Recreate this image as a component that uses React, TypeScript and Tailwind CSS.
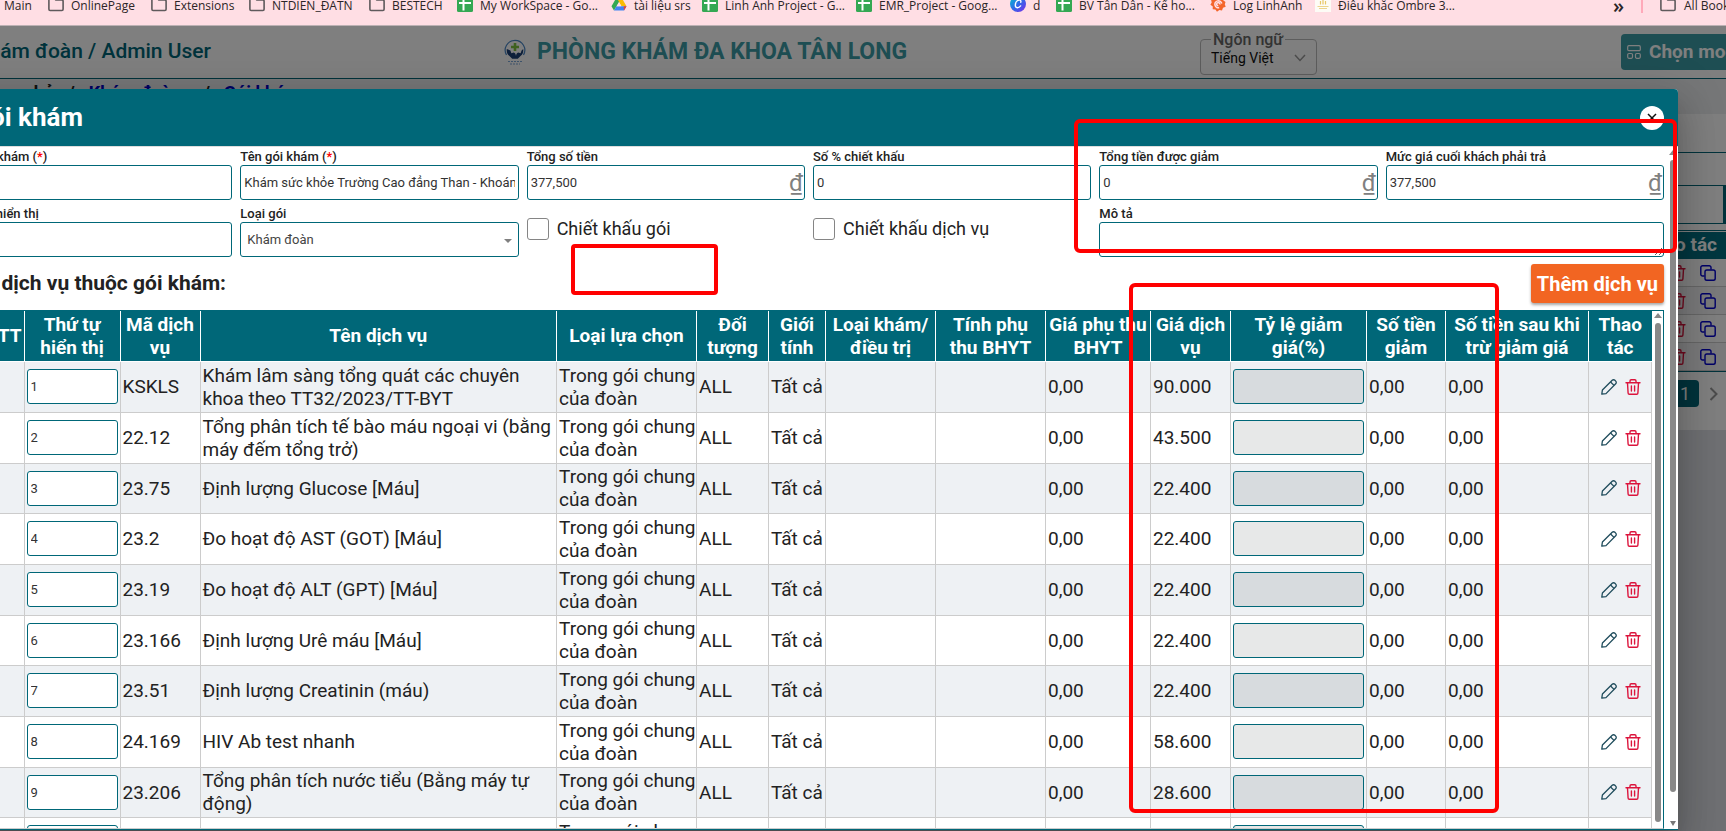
import { useState } from 'react';
import type { ReactNode } from 'react';

const FolderIcon = () => (
  <svg viewBox="0 0 16 16" className="size-4 shrink-0" fill="none">
    <path
      d="M.9 3.2c0-.7.5-1.2 1.2-1.2h3.8l1.9 2h6.1c.7 0 1.2.5 1.2 1.2v8.1c0 .7-.5 1.2-1.2 1.2H2.1c-.7 0-1.2-.5-1.2-1.2V3.2Z"
      stroke="#5f5a5c"
      strokeWidth="1.6"
    />
  </svg>
);

const SheetIcon = () => (
  <svg viewBox="0 0 16 16" className="size-4 shrink-0">
    <rect width="16" height="16" rx="1.5" fill="#34a853" />
    <path d="M2 7h12M6.5 2.5v12" stroke="#fff" strokeWidth="2" />
  </svg>
);

const DriveIcon = () => (
  <svg viewBox="0 0 16 16" className="size-4 shrink-0">
    <path d="M5.5 1.5h5L8 6 3 14.5.5 10.2Z" fill="#34a853" />
    <path d="M5.5 1.5h5l5 8.7h-5Z" fill="#fbbc04" />
    <path d="M5.4 10.2h10.1L13 14.5H3Z" fill="#4285f4" />
    <path d="M12.6 10.2h2.9L13 14.5Z" fill="#ea4335" />
    <path d="M8 6.2 5.7 10.2h4.6Z" fill="#ffdee4" />
  </svg>
);

const CanvaIcon = () => (
  <svg viewBox="0 0 16 16" className="size-4 shrink-0">
    <defs>
      <linearGradient id="canva" x1="0" y1="0" x2="1" y2="1">
        <stop offset="0" stopColor="#00c4cc" />
        <stop offset=".5" stopColor="#2f6be8" />
        <stop offset="1" stopColor="#7d2ae8" />
      </linearGradient>
    </defs>
    <circle cx="8" cy="8" r="8" fill="url(#canva)" />
    <path
      d="M10.8 6.2c.4-1.6-.6-2.5-1.9-2.2C6.8 4.4 5.3 7 5.3 9.300c0 3.200 3.400 3 5.300.6"
      fill="none"
      stroke="#fff"
      strokeWidth="1.4"
      strokeLinecap="round"
    />
  </svg>
);

const GrafanaIcon = () => (
  <svg viewBox="0 0 16 16" className="size-4 shrink-0">
    <path
      d="m8 0 2 1.800 2.800-.2.400 2.600L15.500 6l-.7 2.200.9 2.600-2.700.9-1 2.700-2.600-.5L7 15.800l-1.600-2.300-2.700-.200.100-2.700L.4 8.800l1.300-2.200-.6-2.700 2.700-.5L5.200.9l1.900.8Z"
      fill="#f4652b"
    />
    <path
      d="M11.8 7.5a3.5 3.5 0 1 0-2.6 4.2M9.8 8.5a1.6 1.6 0 1 0-1.5 1.3"
      fill="none"
      stroke="#ffdee4"
      strokeWidth="1.5"
    />
  </svg>
);

const StatueIcon = () => (
  <svg viewBox="0 0 16 16" className="size-4 shrink-0">
    <rect width="16" height="16" fill="#fdfcf6" />
    <path d="M8 2.500v6M5.500 5v3.500M10.500 5v3.500" stroke="#e8c766" strokeWidth="1.2" />
    <path d="M2.500 10.500h11M4 12.500h8" stroke="#ecd58c" strokeWidth="1.2" />
  </svg>
);

const PencilIcon = () => (
  <svg viewBox="0 0 16 16" className="size-4" fill="none" stroke="#1f4c5c" strokeWidth="1.3">
    <path d="M.8 15.2 1.400 11 11.200 1.300a1.900 1.900 0 0 1 2.700 0l.8.8a1.900 1.900 0 0 1 0 2.700L5 14.600Z" strokeLinejoin="round" />
    <path d="m9.600 3 3.400 3.400" />
  </svg>
);

const TrashIcon = () => (
  <svg viewBox="0 0 16 16" className="size-4 shrink-0" fill="none" stroke="#dc143c" strokeWidth="1.4">
    <path d="M1 3.700h14M5 3.500V2A1.200 1.200 0 0 1 6.200.8h3.600A1.200 1.200 0 0 1 11 2v1.500" strokeLinecap="round" />
    <path d="m2.500 4 .6 9.900c0 .8.6 1.300 1.300 1.300h7.200c.7 0 1.300-.5 1.300-1.300l.6-9.900" />
    <path d="M6.400 7v5M9.600 7v5" strokeLinecap="round" />
  </svg>
);

const CopyIcon = () => (
  <svg viewBox="0 0 16 16" className="size-4 shrink-0" fill="none" stroke="#0000d0" strokeWidth="1.4">
    <rect x="5" y="5" width="10.2" height="10.2" rx="1.8" />
    <path d="M4.500 11H2.600A1.800 1.800 0 0 1 .8 9.200V2.600A1.800 1.800 0 0 1 2.600.8h6.600A1.800 1.800 0 0 1 11 2.600v1.900" />
  </svg>
);

const ClinicLogo = () => (
  <svg viewBox="0 0 24 26" className="h-[26px] w-6 shrink-0" fill="none">
    <path d="M3.500 16A9.800 9.800 0 1 1 20.500 16" stroke="#4a86c5" strokeWidth="1.2" />
    <path d="M10.700 4h2.600v2.700H16v2.600h-2.700V12h-2.600V9.300H8V6.700h2.700Z" fill="#7fc241" />
    <path
      d="M3.800 10c-.3 3 .4 5.200 2.400 6.800l3 3h5.600l3-3c2-1.600 2.700-3.800 2.400-6.800l-1.600 1.500-1 2.800-2.300-.8c-1.600.5-2 1.800-2.300 3.500-.3-1.700-.7-3-2.300-3.500l-2.300.8-1-2.800Z"
      fill="#1d4176"
    />
    <path d="M5 22.500h14M7 25h10" stroke="#7fa8d8" strokeWidth="1.2" strokeDasharray="2 1" />
  </svg>
);

const bookmarks = [
  { name: 'Main', icon: null, width: 'w-11' },
  { name: 'OnlinePage', icon: <FolderIcon />, width: 'w-[103px]' },
  { name: 'Extensions', icon: <FolderIcon />, width: 'w-[98px]' },
  { name: 'NTDIEN_ĐATN', icon: <FolderIcon />, width: 'w-[120px]' },
  { name: 'BESTECH', icon: <FolderIcon />, width: 'w-[88px]' },
  { name: 'My WorkSpace - Go...', icon: <SheetIcon />, width: 'w-[154px]' },
  { name: 'tài liệu srs', icon: <DriveIcon />, width: 'w-[91px]' },
  { name: 'Linh Anh Project - G...', icon: <SheetIcon />, width: 'w-[154px]' },
  { name: 'EMR_Project - Goog...', icon: <SheetIcon />, width: 'w-[154px]' },
  { name: 'd', icon: <CanvaIcon />, width: 'w-[46px]' },
  { name: 'BV Tân Dân - Kế ho...', icon: <SheetIcon />, width: 'w-[154px]' },
  { name: 'Log LinhAnh', icon: <GrafanaIcon />, width: 'w-[105px]' },
  { name: 'Điêu khắc Ombre 3...', icon: <StatueIcon />, width: 'w-[140px]' },
];

const columns = [
  { title: 'STT', width: 'w-[70px]' },
  { title: 'Thứ tự hiển thị', width: 'w-24' },
  { title: 'Mã dịch vụ', width: 'w-20' },
  { title: 'Tên dịch vụ', width: '' },
  { title: 'Loại lựa chọn', width: 'w-[140px]' },
  { title: 'Đối tượng', width: 'w-[72px]' },
  { title: 'Giới tính', width: 'w-[57px]' },
  { title: 'Loại khám/ điều trị', width: 'w-[110px]' },
  { title: 'Tính phụ thu BHYT', width: 'w-[110px]' },
  { title: 'Giá phụ thu BHYT', width: 'w-[105px]' },
  { title: 'Giá dịch vụ', width: 'w-20' },
  { title: 'Tỷ lệ giảm giá(%)', width: 'w-[136px]' },
  { title: 'Số tiền giảm', width: 'w-[79px]' },
  { title: 'Số tiền sau khi trừ giảm giá', width: 'w-[143px]' },
  { title: 'Thao tác', width: 'w-[63px]' },
];

const services = [
  { code: 'KSKLS', name: 'Khám lâm sàng tổng quát các chuyên khoa theo TT32/2023/TT-BYT', price: '90.000' },
  { code: '22.12', name: 'Tổng phân tích tế bào máu ngoại vi (bằng máy đếm tổng trở)', price: '43.500' },
  { code: '23.75', name: 'Định lượng Glucose [Máu]', price: '22.400' },
  { code: '23.2', name: 'Đo hoạt độ AST (GOT) [Máu]', price: '22.400' },
  { code: '23.19', name: 'Đo hoạt độ ALT (GPT) [Máu]', price: '22.400' },
  { code: '23.166', name: 'Định lượng Urê máu [Máu]', price: '22.400' },
  { code: '23.51', name: 'Định lượng Creatinin (máu)', price: '22.400' },
  { code: '24.169', name: 'HIV Ab test nhanh', price: '58.600' },
  { code: '23.206', name: 'Tổng phân tích nước tiểu (Bằng máy tự động)', price: '28.600' },
  { code: '', name: '', price: '' },
];

function Field({
  id,
  label,
  required,
  className = '',
  children,
}: {
  id: string;
  label: string;
  required?: boolean;
  className?: string;
  children: ReactNode;
}) {
  return (
    <div className={`flex min-w-0 flex-col ${className}`}>
      <label htmlFor={id} className="pb-px text-[13px] leading-[14px] font-medium whitespace-nowrap text-[#222]">
        {label}
        {required && (
          <>
            {' '}
            (<span className="text-[#ff0000]">*</span>)
          </>
        )}
      </label>
      {children}
    </div>
  );
}

const inputClass =
  'h-[35px] w-full rounded-[3px] border border-[#006778] bg-white px-[3px] text-[13px] text-[#333] outline-none';

function MoneyInput({ id, value }: { id: string; value: string }) {
  return (
    <div className="flex h-[35px] items-center rounded-[3px] border border-[#006778] bg-white pr-px pl-[3px]">
      <input id={id} defaultValue={value} className="min-w-0 flex-1 text-[13px] text-[#333] outline-none" />
      <span className="text-2xl leading-none text-[#808080]">₫</span>
    </div>
  );
}

function BookmarkBar() {
  return (
    <nav className="h-[26px] shrink-0 overflow-hidden border-b border-[#bdb1b4] bg-[#ffdee4] font-['Open_Sans',sans-serif] text-xs leading-[19px] text-[#2b2527]">
      <div className="-mt-1 flex pl-1">
        {bookmarks.map(item => (
          <a key={item.name} href="#" className={`flex shrink-0 gap-[7px] whitespace-nowrap ${item.width}`}>
            {item.icon}
            {item.name}
          </a>
        ))}
        <button className="ml-auto text-xl leading-4 font-semibold">»</button>
        <div className="mx-[17px] h-[17px] w-0.5 shrink-0 bg-[#ffa9b9]" />
        <a href="#" className="-mr-[38px] flex shrink-0 gap-2 whitespace-nowrap">
          <FolderIcon />
          All Bookmarks
        </a>
      </div>
    </nav>
  );
}

function PageBehind() {
  return (
    <div className="flex h-full flex-col bg-[#dfe1e6]">
      <header className="flex h-[53px] shrink-0 items-center border-b border-[#006778] bg-white">
        <div className="flex w-[211px] justify-end text-[21px] font-medium whitespace-nowrap text-[#006778]">
          Khám đoàn / Admin User
        </div>
        <div className="ml-[292px] flex items-center gap-2.5">
          <ClinicLogo />
          <span className="text-[23px] font-bold whitespace-nowrap text-[#3c9ca6]">
            PHÒNG KHÁM ĐA KHOA TÂN LONG
          </span>
        </div>
        <fieldset className="mt-0.5 ml-auto h-[43px] w-[117px] rounded border border-[#bbb] px-2.5">
          <legend className="px-0.5 text-base leading-4 font-medium text-[#666]">
            <label htmlFor="lang">Ngôn ngữ</label>
          </legend>
          <div className="flex items-center">
            <select id="lang" className="flex-1 appearance-none text-sm leading-5 text-[#111]">
              <option>Tiếng Việt</option>
            </select>
            <svg viewBox="0 0 12 8" className="h-2 w-3" fill="none" stroke="#999" strokeWidth="1.5">
              <path d="m1 1 5 5.500L11 1" />
            </svg>
          </div>
        </fieldset>
        <button className="ml-[304px] flex h-9 w-[105px] shrink-0 items-center gap-2 overflow-hidden rounded-l bg-[#3c9ca6] pl-1.5 text-[19px] font-bold whitespace-nowrap text-white">
          <svg viewBox="0 0 14 14" className="size-3.5 shrink-0" fill="none" stroke="#fff" strokeWidth="1.2">
            <rect x=".7" y=".7" width="12.6" height="5" rx="1.2" />
            <rect x=".7" y="8.5" width="4.8" height="4.8" rx="1.2" />
            <rect x="8.5" y="8.5" width="4.8" height="4.8" rx="1.2" />
          </svg>
          Chọn module
        </button>
      </header>

      <div className="flex h-[35px] shrink-0 items-center gap-3.5 overflow-hidden bg-[#edeef1] pb-2 text-lg font-bold whitespace-nowrap text-[#0000c8]">
        <div className="flex w-[54px] justify-end text-[#222]">Trang chủ</div>
        <span className="text-[#222]">/</span>
        <a href="#">Khám đoàn</a>
        <span className="ml-2 text-[#222]">/</span>
        <a href="#">Gói khám</a>
      </div>

      <div className="h-[316px] shrink-0 bg-white pt-[38px]">
        <div className="flex h-[33px] border-t border-[#006778]" />
        <div className="h-[39px] border-y border-r-[3px] border-[#006778]" />
        <div className="mt-1.5 border-y border-[#006778]">
          <div className="mt-px flex h-[27px] items-center justify-end bg-[#006f80] pr-[9px] text-[19px] font-bold text-white">
            Thao tác
          </div>
          {[0, 1, 2, 3].map(row => (
            <div
              key={row}
              className="flex h-7 items-center justify-end gap-3.5 border-b border-[#ccc] pr-2.5 odd:bg-[#f4f5f7]"
            >
              <TrashIcon />
              <CopyIcon />
            </div>
          ))}
        </div>
        <div className="mt-2 flex items-center justify-end gap-2.5 pr-2">
          <button className="h-[27px] w-7 rounded bg-[#006778] text-lg leading-none text-white">1</button>
          <svg viewBox="0 0 9 14" className="h-3.5 w-[9px]" fill="none" stroke="#999" strokeWidth="2">
            <path d="m1.500 1 6 6-6 6" />
          </svg>
        </div>
      </div>
    </div>
  );
}

function PackageForm() {
  return (
    <div className="grid grid-cols-6 gap-x-2 gap-y-[7px]">
      <Field id="code" label="Mã gói khám" required>
        <input id="code" className={inputClass} />
      </Field>
      <Field id="name" label="Tên gói khám" required>
        <input id="name" defaultValue="Khám sức khỏe Trường Cao đẳng Than - Khoáng sản" className={inputClass} />
      </Field>
      <Field id="total" label="Tổng số tiền">
        <MoneyInput id="total" value="377,500" />
      </Field>
      <Field id="percent" label="Số % chiết khấu">
        <input id="percent" defaultValue="0" className={inputClass} />
      </Field>
      <Field id="discount" label="Tổng tiền được giảm">
        <MoneyInput id="discount" value="0" />
      </Field>
      <Field id="final" label="Mức giá cuối khách phải trả">
        <MoneyInput id="final" value="377,500" />
      </Field>

      <Field id="order" label="Thứ tự hiển thị">
        <input id="order" className={inputClass} />
      </Field>
      <Field id="type" label="Loại gói">
        <div className="flex h-[35px] items-center rounded-[3px] border border-[#006778] bg-white px-1.5">
          <select id="type" className="flex-1 appearance-none text-[13px] text-[#444] outline-none">
            <option>Khám đoàn</option>
          </select>
          <svg viewBox="0 0 8 4" className="mt-0.5 h-1 w-2">
            <path d="M0 0h8L4 4Z" fill="#808080" />
          </svg>
        </div>
      </Field>
      {['Chiết khấu gói', 'Chiết khấu dịch vụ'].map(label => (
        <label key={label} className="mt-[11px] flex h-[22px] items-center gap-2 text-lg text-[#222]">
          <input type="checkbox" className="size-[22px] appearance-none rounded-[3px] border border-[#858585] bg-white" />
          {label}
        </label>
      ))}
      <Field id="note" label="Mô tả" className="col-span-2">
        <textarea id="note" className={inputClass} />
      </Field>
    </div>
  );
}

function ServiceTable() {
  return (
    <table className="w-full min-w-0 flex-1 table-fixed border-collapse text-[19px] leading-[23px] text-[#222]">
      <thead>
        <tr className="h-[50px] bg-[#006778] text-white">
          {columns.map(col => (
            <th
              key={col.title}
              className={`border-r border-b border-white px-0.5 py-0 font-bold first:text-right last:border-r-0 ${col.width}`}
            >
              {col.title}
            </th>
          ))}
        </tr>
      </thead>
      <tbody>
        {services.map((item, index) => (
          <tr
            key={index}
            className="h-[51px] odd:bg-[#eef1f4] nth-[3n]:h-[50px] [&>td]:border-r [&>td]:border-b [&>td]:border-[#ccc] [&>td]:py-0 [&>td]:pr-0 [&>td]:pl-0.5"
          >
            <td>{index + 1}</td>
            <td>
              <div className="pr-0.5">
                <input
                  aria-label="Thứ tự hiển thị"
                  defaultValue={index + 1}
                  className="block h-[35px] w-full rounded-[3px] border border-[#006778] bg-white px-[3px] text-[13px] text-[#333]"
                />
              </div>
            </td>
            <td>{item.code}</td>
            <td>{item.name}</td>
            <td>Trong gói chung của đoàn</td>
            <td>ALL</td>
            <td className="whitespace-nowrap">Tất cả</td>
            <td />
            <td />
            <td>0,00</td>
            <td>{item.price}</td>
            <td>
              <div className="pr-0.5">
                <input
                  aria-label="Tỷ lệ giảm giá"
                  disabled
                  className="block h-[35px] w-full rounded-[3px] border border-[#006778] bg-[#142020]/10"
                />
              </div>
            </td>
            <td>0,00</td>
            <td>0,00</td>
            <td>
              <div className="flex items-center justify-center gap-2">
                <button aria-label="Sửa">
                  <PencilIcon />
                </button>
                <button aria-label="Xóa">
                  <TrashIcon />
                </button>
              </div>
            </td>
          </tr>
        ))}
      </tbody>
    </table>
  );
}

const ArrowUp = () => (
  <svg viewBox="0 0 8 5" className="h-[5px] w-2 shrink-0">
    <path d="M4 0 8 5H0Z" fill="#888" />
  </svg>
);

function PackageDialog({ onClose }: { onClose: () => void }) {
  return (
    <div
      role="dialog"
      aria-label="Gói khám"
      className="mr-12 -ml-[60px] flex h-full flex-col overflow-hidden rounded-t bg-white shadow-[0_11px_15px_-7px_rgba(0,0,0,0.2),0_24px_38px_3px_rgba(0,0,0,0.14),0_9px_46px_8px_rgba(0,0,0,0.12)]"
    >
      <div className="flex h-[57px] shrink-0 items-center justify-between bg-[#006778] pr-3.5">
        <h2 className="flex w-[143px] justify-end text-[26px] font-bold whitespace-nowrap text-white">Gói khám</h2>
        <button
          onClick={onClose}
          aria-label="Đóng"
          className="flex size-6 items-center justify-center rounded-full bg-white"
        >
          <svg viewBox="0 0 10 10" className="size-2.5" stroke="#111" strokeWidth="1.5">
            <path d="m1 1 8 8M9 1 1 9" />
          </svg>
        </button>
      </div>

      <div className="flex min-h-0 flex-1 border-t border-b border-t-[#ddd] border-b-[#006778]">
        <div className="flex min-w-0 flex-1 flex-col gap-[7px] pt-[3px] pl-3.5">
          <PackageForm />

          <div className="flex items-center justify-between">
            <h3 className="flex w-[272px] justify-end text-[21px] font-bold whitespace-nowrap text-[#222]">
              Danh sách dịch vụ thuộc gói khám:
            </h3>
            <button className="h-[39px] rounded-[3px] bg-[#f26522] px-1.5 text-xl font-bold whitespace-nowrap text-white shadow-[0_2px_3px_rgba(0,0,0,0.35)]">
              Thêm dịch vụ
            </button>
          </div>

          <div className="flex min-h-0 flex-1 items-start overflow-hidden border-t border-r border-b border-t-[#006778] border-r-[#006778] border-b-[#ccc]">
            <ServiceTable />
            <div className="flex w-[11px] shrink-0 flex-col items-center gap-[5px] self-stretch pt-0.5 pb-1.5">
              <ArrowUp />
              <div className="w-1.5 flex-1 rounded-full bg-[#888]" />
            </div>
          </div>
        </div>

        <div className="flex w-3.5 shrink-0 flex-col items-center gap-[5px] pt-[3px] pb-[3px] pl-1">
          <ArrowUp />
          <div className="w-1.5 flex-1 rounded-full bg-[#888]" />
          <svg viewBox="0 0 6 5" className="mt-6 h-[5px] w-1.5 shrink-0">
            <path d="M0 0h6L3 5Z" fill="#777" />
          </svg>
        </div>
      </div>
    </div>
  );
}

// red frames drawn on top of everything
function Highlights() {
  return (
    <div className="pointer-events-none absolute inset-0">
      <div className="absolute top-[119px] left-[1074px] h-[134px] w-[603px] rounded-md border-4 border-[#ff0000]" />
      <div className="absolute top-[244px] left-[571px] h-[51px] w-[147px] rounded border-4 border-[#ff0000]" />
      <div className="absolute top-[283px] left-[1129px] h-[530px] w-[370px] rounded-md border-4 border-[#ff0000]" />
    </div>
  );
}

export default function App() {
  const [open, setOpen] = useState(true);

  return (
    <div className="relative flex h-screen flex-col overflow-hidden font-[Roboto,sans-serif]">
      <BookmarkBar />
      <main className="relative min-h-0 flex-1 overflow-hidden">
        <PageBehind />
        {open && (
          <div className="absolute inset-0 bg-black/50 pt-[63px] pb-px">
            <PackageDialog onClose={() => setOpen(false)} />
          </div>
        )}
      </main>
      <Highlights />
    </div>
  );
}
